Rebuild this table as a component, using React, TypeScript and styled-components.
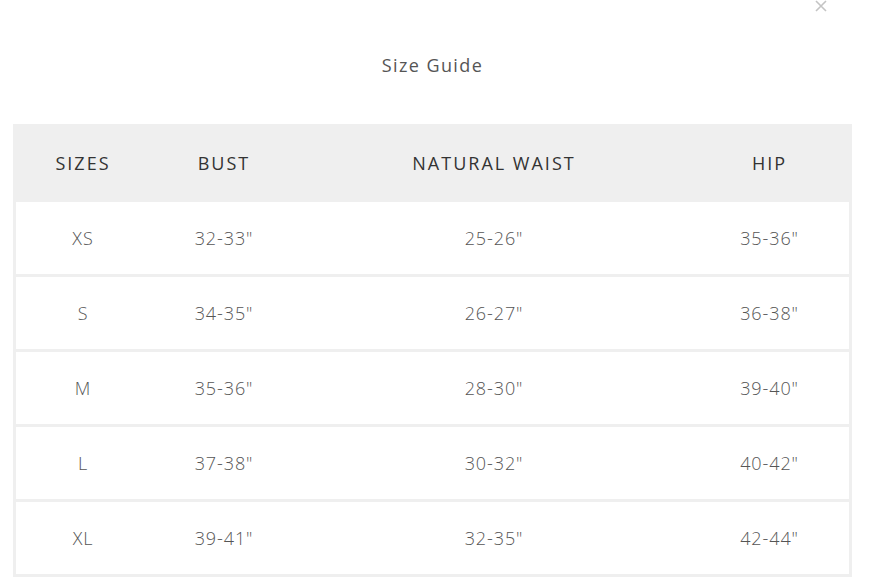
import React from "react";
import styled, { createGlobalStyle } from "styled-components";

const GlobalStyle = createGlobalStyle`
  html, body {
    margin: 0;
    padding: 0;
    background: #fff;
  }
  body {
    font-family: "Open Sans", "Liberation Sans", sans-serif;
  }
`;

const Modal = styled.div`
  position: relative;
  width: 871px;
  padding: 53px 19px 0 13px;
  box-sizing: border-box;
`;

const CloseButton = styled.button`
  position: absolute;
  top: -1px;
  right: 44px;
  width: 13px;
  height: 13px;
  padding: 0;
  border: none;
  background: transparent;
  cursor: pointer;
  display: flex;
  align-items: center;
  justify-content: center;
`;

const Title = styled.h2`
  margin: 0;
  font-size: 18px;
  line-height: 24px;
  font-weight: 400;
  letter-spacing: 1.4px;
  color: #555;
  text-align: center;
`;

const Table = styled.table`
  margin-top: 47px;
  width: 839px;
  table-layout: fixed;
  border-collapse: separate;
  border-spacing: 0 3px;
  padding: 0 3px;
  background: #efefef;
`;

const HeadCell = styled.th`
  height: 72px;
  padding: 0;
  background: #efefef;
  color: #333;
  font-size: 18px;
  font-weight: 500;
  letter-spacing: 2px;
  text-align: center;
  vertical-align: middle;
`;

const Cell = styled.td`
  height: 72px;
  padding: 0;
  background: #fff;
  color: #555;
  font-size: 18px;
  font-weight: 300;
  letter-spacing: 0.9px;
  text-align: center;
  vertical-align: middle;
`;

const COLUMNS = [
  { label: "SIZES", width: 134 },
  { label: "BUST", width: 148 },
  { label: "NATURAL WAIST", width: 392 },
  { label: "HIP", width: 159 },
];

const SIZES = [
  ["XS", `32-33"`, `25-26"`, `35-36"`],
  ["S", `34-35"`, `26-27"`, `36-38"`],
  ["M", `35-36"`, `28-30"`, `39-40"`],
  ["L", `37-38"`, `30-32"`, `40-42"`],
  ["XL", `39-41"`, `32-35"`, `42-44"`],
];

const CloseIcon = () => (
  <svg width="12" height="12" viewBox="0 0 12 12">
    <path d="M1 1 L11 11 M11 1 L1 11" stroke="#c4c4c4" strokeWidth="1.6" />
  </svg>
);

const App = () => {
  return (
    <Modal>
      <GlobalStyle />
      <CloseButton aria-label="Close">
        <CloseIcon />
      </CloseButton>
      <Title>Size Guide</Title>
      <Table>
        <colgroup>
          {COLUMNS.map((col) => (
            <col key={col.label} style={{ width: col.width }} />
          ))}
        </colgroup>
        <thead>
          <tr>
            {COLUMNS.map((col) => (
              <HeadCell key={col.label}>{col.label}</HeadCell>
            ))}
          </tr>
        </thead>
        <tbody>
          {SIZES.map((row) => (
            <tr key={row[0]}>
              {row.map((value, i) => (
                <Cell key={i}>{value}</Cell>
              ))}
            </tr>
          ))}
        </tbody>
      </Table>
    </Modal>
  );
};

export default App;
